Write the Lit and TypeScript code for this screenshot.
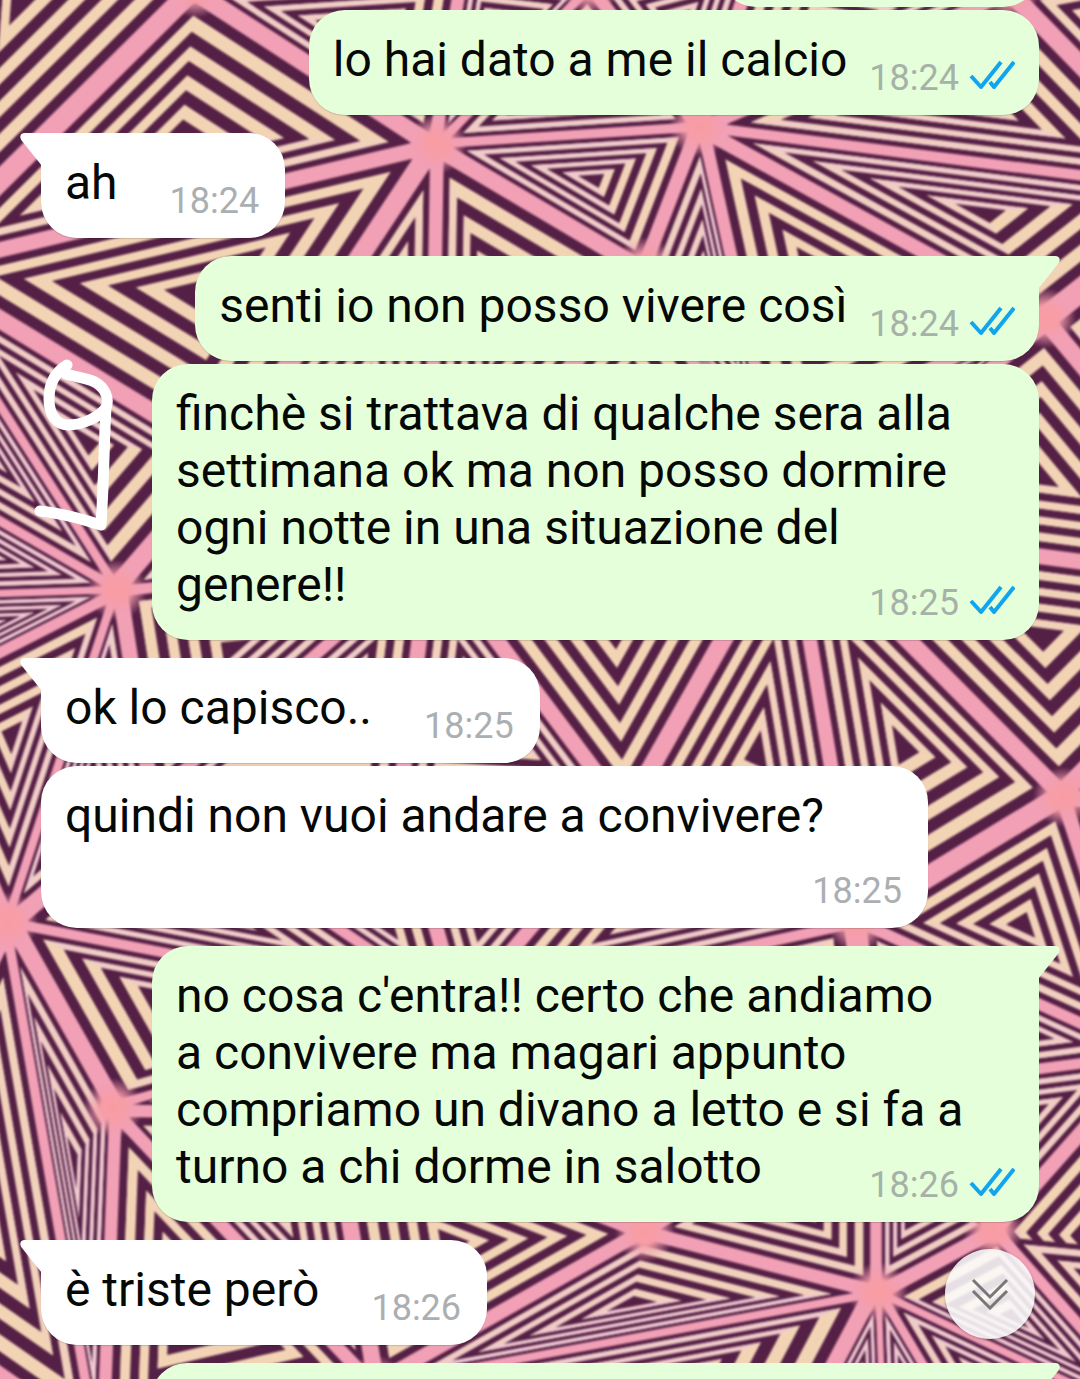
import { LitElement, html, svg, css, nothing } from "lit";
import { customElement, property } from "lit/decorators.js";
import { classMap } from "lit/directives/class-map.js";

interface Message {
  text: string;
  time: string;
  out?: boolean;
  first?: boolean;
  long?: boolean;
}

type Point = [number, number];

const MESSAGES: Message[] = [
  { text: "lo hai dato a me il calcio", time: "18:24", out: true },
  { text: "ah", time: "18:24", first: true },
  { text: "senti io non posso vivere così", time: "18:24", out: true, first: true },
  {
    text: "finchè si trattava di qualche sera alla settimana ok ma non posso dormire ogni notte in una situazione del genere!!",
    time: "18:25",
    out: true,
    long: true,
  },
  { text: "ok lo capisco..", time: "18:25", first: true },
  { text: "quindi non vuoi andare a convivere?", time: "18:25" },
  {
    text: "no cosa c'entra!! certo che andiamo a convivere ma magari appunto compriamo un divano a letto e si fa a turno a chi dorme in salotto",
    time: "18:26",
    out: true,
    first: true,
    long: true,
  },
  { text: "è triste però", time: "18:26", first: true },
];

/* Corner points of the wallpaper's triangle mesh. */
const NODES: Record<string, Point> = {
  a: [437, 144], b: [699, 127], c: [196, -12], d: [-88, 270], e: [1206, 192],
  f: [1046, 318], g: [117, 590], h: [-90, 470], i: [-90, 597], j: [-90, 695],
  k: [8, 922], l: [150, 800], m: [400, 800], n: [625, 815], o: [857, 922],
  p: [113, 1108], q: [100, 1450], r: [1148, 1055], s: [1010, -10], t: [645, 267],
  u: [430, 555], v: [790, 523], w: [-160, 1270], x: [227, 462], y: [770, 450],
  z: [1063, 797], A: [460, 1010], B: [375, 1385], C: [878, 1292], D: [645, 1232],
  E: [993, 1230], F: [1169, 1429], G: [330, 1110], H: [878, 1090], I: [795, 1450],
  J: [885, 1480], K: [990, 1480], L: [1270, 587], M: [-48, -263], N: [465, -30],
  O: [590, -15], P: [760, -60], Q: [1280, -60], R: [1300, 820], S: [330, -300],
  T: [860, -280], U: [-300, 500], V: [1300, 1260],
};

const TRIANGLES =
  "cad adx dxg dgh hgi igj gjk gkl gul ulm lmA klA kAp kpq kqw jkw pqB pGB pAG AGD GDB " +
  "mAn umn unv vno voz onA AoH AHD HDC HCE DCB CEF EFr HEr oHr ozr CBI CIJ CJK CKF " +
  "vzL fvL feL fyv bfy bty tyv tuv atu axu xgu abt bef bes abO bOP bPs caN aNO cdM " +
  "cMS cNS NOS OPT PTs sTQ seQ zLR zrR rFV EFV";

const RINGS = [0.9, 0.81, 0.7, 0.6, 0.5, 0.4, 0.3, 0.2, 0.1];

const PINK_STRIPE = [238, 199, 209];
const SAND_STRIPE = [242, 212, 181];

function ringPoints(corners: Point[], centre: Point, scale: number): string {
  return corners
    .map(([x, y]) => {
      const px = centre[0] + (x - centre[0]) * scale;
      const py = centre[1] + (y - centre[1]) * scale;
      return `${px.toFixed(1)},${py.toFixed(1)}`;
    })
    .join(" ");
}

/* Thin stripes are pale pink, wide ones lean towards sand. */
function stripeColour(from: Point, to: Point, centre: Point): string {
  const dx = to[0] - from[0];
  const dy = to[1] - from[1];
  const distance =
    Math.abs(dx * (centre[1] - from[1]) - dy * (centre[0] - from[0])) / Math.hypot(dx, dy);
  const mix = Math.min(1, Math.max(0, (distance - 35) / 50));
  const channels = PINK_STRIPE.map((value, index) =>
    Math.round(value + (SAND_STRIPE[index] - value) * mix)
  );
  return `rgb(${channels.join(",")})`;
}

function triangle(keys: string) {
  const corners = [...keys].map((key) => NODES[key]);
  const centre: Point = [
    corners.reduce((sum, point) => sum + point[0], 0) / 3,
    corners.reduce((sum, point) => sum + point[1], 0) / 3,
  ];
  const sides = corners.map((from, index) => {
    const to = corners[(index + 1) % 3];
    return { points: [from, to, centre], fill: stripeColour(from, to, centre) };
  });
  return RINGS.map((scale, index) =>
    index % 2 === 0
      ? svg`<polygon points=${ringPoints(corners, centre, scale)} fill="#552045"></polygon>`
      : svg`<polygon points=${ringPoints(corners, centre, scale)} fill="#eecbc6"></polygon>
          ${sides.map(
            (side) => svg`<polygon
              points=${ringPoints(side.points as Point[], centre, scale)}
              fill=${side.fill}></polygon>`
          )}`
  );
}

@customElement("chat-wallpaper")
export class ChatWallpaper extends LitElement {
  static styles = css`
    :host {
      display: block;
      overflow: hidden;
      background: #f1a0b6;
    }
    .art {
      display: block;
      width: 100%;
      height: 100%;
    }
    .soft {
      filter: blur(1px);
    }
  `;

  render() {
    return html`<svg class="art" viewBox="0 0 1080 1379" preserveAspectRatio="xMidYMid slice" aria-hidden="true">
      <defs>
        <radialGradient id="knot">
          <stop offset="0" stop-color="#f99ca3"></stop>
          <stop offset="0.4" stop-color="#f79da7"></stop>
          <stop offset="1" stop-color="#f1a0b6" stop-opacity="0"></stop>
        </radialGradient>
      </defs>
      <g class="soft">
        <rect x="-10" y="-10" width="1100" height="1399" fill="#f1a0b6"></rect>
        ${TRIANGLES.split(" ").map(triangle)}
        ${Object.values(NODES).map(
          ([x, y]) => svg`<circle cx=${x} cy=${y} r="30" fill="url(#knot)"></circle>`
        )}
      </g>
    </svg>`;
  }
}

@customElement("chat-bubble")
export class ChatBubble extends LitElement {
  @property({ attribute: false }) message?: Message;

  static styles = css`
    :host {
      display: block;
      min-width: 0;
      max-width: 887px;
    }
    .bubble {
      position: relative;
      display: flex;
      flex-wrap: wrap;
      column-gap: 52px;
      padding: 21px 26px 16px 24px;
      border-radius: 36px;
      background: #ffffff;
      box-shadow: 0 1px 1px rgba(0, 0, 0, 0.15);
    }
    .out {
      column-gap: 22px;
      padding-right: 24px;
      background: #e4ffda;
    }
    .long {
      display: block;
      padding-right: 75px;
    }
    .tail-left {
      border-top-left-radius: 0;
    }
    .tail-right {
      border-top-right-radius: 0;
    }
    .text {
      margin: 0;
      padding-bottom: 11px;
      font-size: 48px;
      line-height: 57px;
      color: #050805;
    }
    .meta {
      display: flex;
      align-items: center;
      gap: 10px;
      align-self: flex-end;
      margin-left: auto;
      padding-top: 15px;
      font-size: 36px;
      line-height: 42px;
      color: #abafb1;
    }
    .out .meta {
      color: #a6b1a8;
    }
    .long .meta {
      float: right;
      margin-right: -51px;
      padding-top: 26px;
    }
    .tail {
      position: absolute;
      top: 0;
      width: 22px;
      height: 34px;
    }
    .tail-left .tail {
      right: 100%;
      margin-right: -1px;
      fill: #ffffff;
    }
    .tail-right .tail {
      left: 100%;
      margin-left: -1px;
      fill: #e4ffda;
      transform: scaleX(-1);
    }
    .ticks {
      display: block;
      width: 46px;
      height: 38px;
      fill: none;
      stroke: #10a5ee;
      stroke-width: 4;
      stroke-linejoin: round;
    }
  `;

  render() {
    const message = this.message;
    if (!message) return nothing;
    const { text, time, out, first, long } = message;
    const classes = {
      bubble: true,
      out: !!out,
      long: !!long,
      "tail-left": !!first && !out,
      "tail-right": !!first && !!out,
    };
    const meta = html`<span class="meta">
      <time>${time}</time>
      ${out
        ? html`<svg class="ticks" viewBox="0 0 46 38" aria-hidden="true">
            <path d="M2 17L12 28L32 3M21 23L25 28L45 3"></path>
          </svg>`
        : nothing}
    </span>`;
    return html`<article class=${classMap(classes)}>
      ${first
        ? html`<svg class="tail" viewBox="0 0 22 34" aria-hidden="true">
            <path d="M22 0H5C0 0-1 4 2 8L22 33Z"></path>
          </svg>`
        : nothing}
      ${long
        ? html`<div class="text"><span>${text}</span>${meta}</div>`
        : html`<div class="text">${text}</div>${meta}`}
    </article>`;
  }
}

@customElement("app-root")
export class AppRoot extends LitElement {
  static styles = css`
    :host {
      display: block;
      position: relative;
      height: 100vh;
      overflow: hidden;
      font-family: Roboto, "Liberation Sans", sans-serif;
    }
    .wallpaper {
      position: absolute;
      inset: 0;
    }
    .scribble {
      position: absolute;
      left: 30px;
      top: 355px;
      width: 90px;
      height: 180px;
      fill: none;
      stroke: #ffffff;
      stroke-width: 11;
      stroke-linecap: round;
      stroke-linejoin: round;
    }
    .thread {
      position: relative;
      display: flex;
      flex-direction: column;
      align-items: flex-start;
      margin: 0;
      padding: 0 41px;
      list-style: none;
    }
    .row {
      display: flex;
      max-width: 100%;
      margin-top: 3px;
    }
    .row.first {
      margin-top: 18px;
    }
    .row.out {
      align-self: flex-end;
    }
    .edge {
      position: relative;
      align-self: flex-end;
      box-sizing: border-box;
      height: 80px;
      border-radius: 36px;
      background: #e4ffda;
    }
    .edge.above {
      width: 32%;
      margin-top: -73px;
    }
    .edge.below {
      width: 89%;
      margin-top: 18px;
      border-top-right-radius: 0;
    }
    .edge-tail {
      position: absolute;
      top: 0;
      left: 100%;
      width: 22px;
      height: 34px;
      margin-left: -1px;
      fill: #e4ffda;
    }
    .jump {
      position: absolute;
      right: 45px;
      bottom: 40px;
      display: grid;
      place-items: center;
      width: 90px;
      height: 90px;
      padding: 0;
      border: 0;
      border-radius: 50%;
      background: rgba(250, 250, 250, 0.88);
      box-shadow: 0 1px 3px rgba(0, 0, 0, 0.25);
      cursor: pointer;
    }
    .chevrons {
      width: 38px;
      height: 32px;
      fill: none;
      stroke: #777777;
      stroke-width: 3;
    }
  `;

  render() {
    return html`
      <chat-wallpaper class="wallpaper"></chat-wallpaper>
      <svg class="scribble" viewBox="30 355 90 180" aria-hidden="true">
        <path
          d="M67 365C54 373 49 385 49 399C49 414 56 425 68 425C83 425 99 417 106 408C110 397 104 387 95 382C87 378 76 377 66 374M106 408C104 440 104 480 101 525C82 519 62 513 40 511"
        ></path>
      </svg>
      <ol class="thread">
        <li class="edge above"></li>
        ${MESSAGES.map(
          (message) => html`<li
            class=${classMap({ row: true, first: !!message.first, out: !!message.out })}
          >
            <chat-bubble .message=${message}></chat-bubble>
          </li>`
        )}
        <li class="edge below">
          <svg class="edge-tail" viewBox="0 0 22 34" aria-hidden="true">
            <path d="M0 0H17C22 0 23 4 20 8L0 33Z"></path>
          </svg>
        </li>
      </ol>
      <button class="jump" type="button" aria-label="Vai in fondo">
        <svg class="chevrons" viewBox="0 0 38 32" aria-hidden="true">
          <path d="M2 2L19 19L36 2M2 13L19 30L36 13"></path>
        </svg>
      </button>
    `;
  }
}
